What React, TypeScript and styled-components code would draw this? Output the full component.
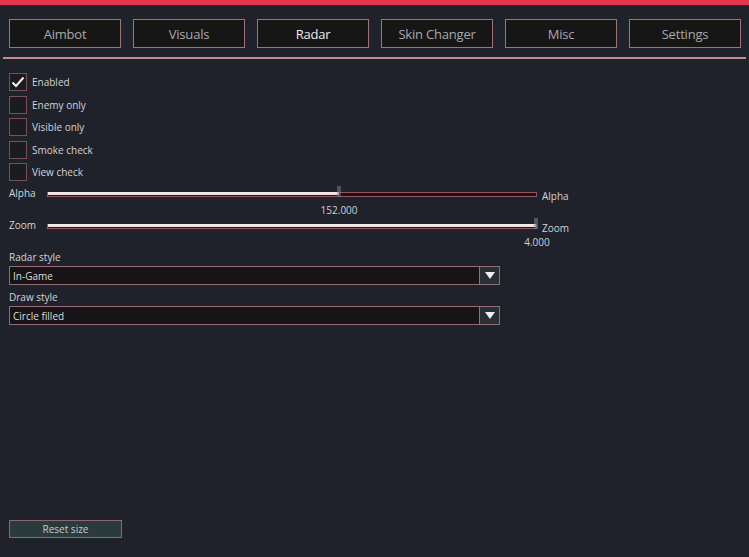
import React from 'react';
import styled, { createGlobalStyle } from 'styled-components';

const GlobalStyle = createGlobalStyle`
  html, body {
    margin: 0;
    padding: 0;
    background: #1f222a;
  }
  * {
    box-sizing: border-box;
  }
`;

const tabs = ['Aimbot', 'Visuals', 'Radar', 'Skin Changer', 'Misc', 'Settings'];
const checks = [
  { label: 'Enabled', on: true },
  { label: 'Enemy only', on: false },
  { label: 'Visible only', on: false },
  { label: 'Smoke check', on: false },
  { label: 'View check', on: false },
];

interface SliderData {
  label: string;
  value: number;
  min: number;
  max: number;
  text: string;
}

const sliders: SliderData[] = [
  { label: 'Alpha', value: 152, min: 0, max: 255, text: '152.000' },
  { label: 'Zoom', value: 4, min: 0, max: 4, text: '4.000' },
];

export default function App(): JSX.Element {
  return (
    <>
      <GlobalStyle />
      <WINDOW>
        <TITLE_BAR />
        <TAB_ROW>
          {tabs.map((t) => (
            <TAB key={t} active={t === 'Radar'}>
              {t}
            </TAB>
          ))}
        </TAB_ROW>
        <SEPARATOR />
        <CONTENT>
          <CHECK_LIST>
            {checks.map((c) => (
              <CHECK_ROW key={c.label}>
                <BOX>
                  {c.on && (
                    <svg width="14" height="12" viewBox="0 0 14 12">
                      <path d="M1.5 6.5 L5 10 L12.5 1.5" fill="none" stroke="#f2f2f2" strokeWidth="2" />
                    </svg>
                  )}
                </BOX>
                <LABEL>{c.label}</LABEL>
              </CHECK_ROW>
            ))}
          </CHECK_LIST>

          <SLIDERS>
            {sliders.map((s) => {
              const pct = ((s.value - s.min) / (s.max - s.min)) * 100;
              return (
                <SLIDER_BLOCK key={s.label}>
                  <SLIDER_ROW>
                    <SLIDER_LABEL>{s.label}</SLIDER_LABEL>
                    <TRACK>
                      <FILL style={{ width: `${pct}%` }} />
                      <GRAB style={{ left: `${pct}%` }} />
                    </TRACK>
                    <SLIDER_LABEL side>{s.label}</SLIDER_LABEL>
                  </SLIDER_ROW>
                  <VALUE_LINE>
                    <VALUE style={{ left: `${pct}%` }}>{s.text}</VALUE>
                  </VALUE_LINE>
                </SLIDER_BLOCK>
              );
            })}
          </SLIDERS>

          <COMBO_GROUP>
            <LABEL>Radar style</LABEL>
            <COMBO>
              <COMBO_TEXT>In-Game</COMBO_TEXT>
              <ARROW>
                <svg width="10" height="8" viewBox="0 0 10 8">
                  <path d="M0 0 H10 L5 7 Z" fill="#f0f0f0" />
                </svg>
              </ARROW>
            </COMBO>
            <LABEL>Draw style</LABEL>
            <COMBO>
              <COMBO_TEXT>Circle filled</COMBO_TEXT>
              <ARROW>
                <svg width="10" height="8" viewBox="0 0 10 8">
                  <path d="M0 0 H10 L5 7 Z" fill="#f0f0f0" />
                </svg>
              </ARROW>
            </COMBO>
          </COMBO_GROUP>

          <SPACER />
          <RESET>Reset size</RESET>
        </CONTENT>
      </WINDOW>
    </>
  );
}

const WINDOW = styled.div`
  width: 749px;
  height: 557px;
  display: flex;
  flex-direction: column;
  background: #1f222a;
  font-family: 'Open Sans', 'Noto Sans', sans-serif;
  overflow: hidden;
`;

const TITLE_BAR = styled.div`
  height: 5px;
  background: #e5364f;
  flex: none;
`;

const TAB_ROW = styled.div`
  display: flex;
  gap: 12px;
  padding: 14px 0 0 9px;
`;

const TAB = styled.div<{ active?: boolean }>`
  width: 112px;
  height: 29px;
  display: flex;
  align-items: center;
  justify-content: center;
  background: #161617;
  border: 1px solid #a0737a;
  color: ${({ active }) => (active ? '#ececec' : '#a9a9aa')};
  font-size: 13px;
  letter-spacing: -0.2px;
`;

const SEPARATOR = styled.div`
  height: 2px;
  margin: 9px 3px 0 3px;
  background: #c98990;
`;

const CONTENT = styled.div`
  flex: 1;
  display: flex;
  flex-direction: column;
  padding: 14px 0 19px 9px;
`;

const CHECK_LIST = styled.div`
  display: flex;
  flex-direction: column;
  gap: 4.5px;
`;

const CHECK_ROW = styled.div`
  display: flex;
  align-items: center;
  gap: 5px;
  height: 18px;
`;

const BOX = styled.div`
  width: 18px;
  height: 18px;
  display: flex;
  align-items: center;
  justify-content: center;
  background: #1b1c1f;
  border: 1px solid #7c4f57;
`;

const LABEL = styled.div`
  color: #d4d4d6;
  font-size: 10px;
  line-height: 14px;
`;

const SLIDERS = styled.div`
  display: flex;
  flex-direction: column;
  margin-top: 5px;
`;

const SLIDER_BLOCK = styled.div`
  display: flex;
  flex-direction: column;
`;

const SLIDER_ROW = styled.div`
  display: flex;
  align-items: center;
  height: 16px;
`;

const SLIDER_LABEL = styled.div<{ side?: boolean }>`
  width: ${({ side }) => (side ? 'auto' : '38px')};
  margin-left: ${({ side }) => (side ? '5px' : '0')};
  margin-top: ${({ side }) => (side ? '4px' : '-3px')};
  color: #d4d4d6;
  font-size: 10px;
`;

const TRACK = styled.div`
  position: relative;
  width: 490px;
  height: 5px;
  background: #2c0b10;
  border: 1px solid #8d5a60;
`;

const FILL = styled.div`
  position: absolute;
  left: 0;
  top: 0;
  height: 2px;
  background: #ede4e5;
  box-shadow: 0 -1px 0 #f4eaea;
`;

const GRAB = styled.div`
  position: absolute;
  top: -7px;
  width: 4px;
  height: 11px;
  margin-left: -2px;
  background: rgba(110, 135, 140, 0.55);
`;

const VALUE_LINE = styled.div`
  position: relative;
  margin-left: 38px;
  width: 490px;
  height: 16px;
`;

const VALUE = styled.div`
  position: absolute;
  top: 1px;
  transform: translateX(-50%);
  color: #d0d0d2;
  font-size: 10px;
  white-space: nowrap;
`;

const COMBO_GROUP = styled.div`
  display: flex;
  flex-direction: column;
  gap: 2px;
  margin-top: 0;
`;

const COMBO = styled.div`
  width: 491px;
  height: 19px;
  display: flex;
  align-items: stretch;
  background: #161415;
  border: 1px solid #9a6a72;
  margin-bottom: 3px;
`;

const COMBO_TEXT = styled.div`
  flex: 1;
  display: flex;
  align-items: center;
  padding-left: 3px;
  color: #dedede;
  font-size: 10px;
`;

const ARROW = styled.div`
  width: 20px;
  display: flex;
  align-items: center;
  justify-content: center;
  background: #2a2f33;
  border-left: 1px solid #9a6a72;
`;

const SPACER = styled.div`
  flex: 1;
`;

const RESET = styled.div`
  width: 113px;
  height: 18px;
  display: flex;
  align-items: center;
  justify-content: center;
  background: #2b3a3d;
  border: 1px solid #93666e;
  color: #c3cccc;
  font-size: 10px;
`;
